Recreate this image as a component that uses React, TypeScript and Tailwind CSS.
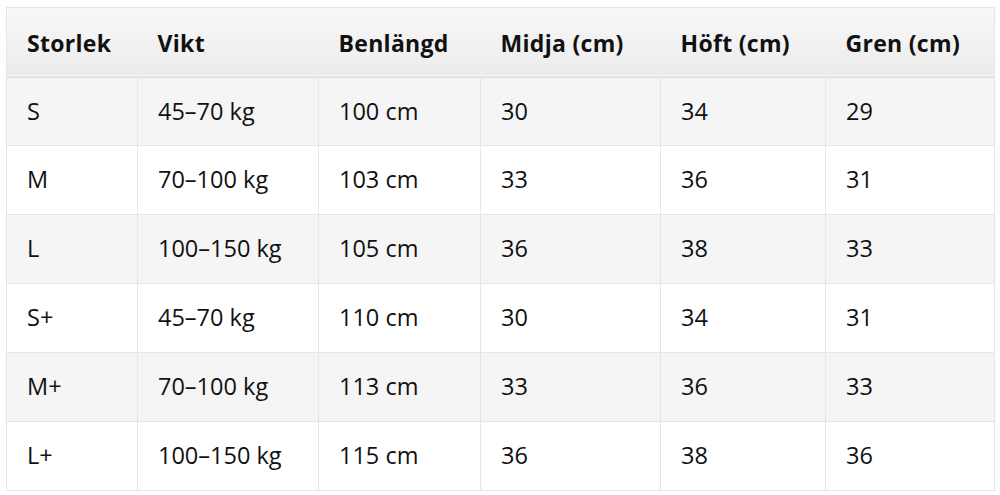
import React from 'react';

const headers = ['Storlek', 'Vikt', 'Benlängd', 'Midja (cm)', 'Höft (cm)', 'Gren (cm)'];

const rows: string[][] = [
  ['S', '45–70 kg', '100 cm', '30', '34', '29'],
  ['M', '70–100 kg', '103 cm', '33', '36', '31'],
  ['L', '100–150 kg', '105 cm', '36', '38', '33'],
  ['S+', '45–70 kg', '110 cm', '30', '34', '31'],
  ['M+', '70–100 kg', '113 cm', '33', '36', '33'],
  ['L+', '100–150 kg', '115 cm', '36', '38', '36'],
];

const widths = ['w-[131px]', 'w-[181px]', 'w-[162px]', 'w-[180px]', 'w-[165px]', 'w-[169px]'];

const App: React.FC = () => {
  return (
    <div className="w-[1000px] h-[495px] bg-white pt-[7px] pl-[6px] font-['Open_Sans',sans-serif] text-[#111]">
      <table className="table-fixed border-collapse border border-[#e6e6e6] w-[989px]">
        <colgroup>
          {widths.map((w, i) => (
            <col key={i} className={w} />
          ))}
        </colgroup>
        <thead>
          <tr className="h-[69px] bg-gradient-to-b from-[#f8f8f8] to-[#ececec] border-b-2 border-[#e2e2e2]">
            {headers.map((h) => (
              <th key={h} className="text-left font-bold text-[23px] pl-[20px] pt-[2px] align-middle tracking-[0.3px]">
                {h}
              </th>
            ))}
          </tr>
        </thead>
        <tbody>
          {rows.map((r, i) => (
            <tr key={i} className={`h-[69px] ${i % 2 === 0 ? 'bg-[#f5f5f5]' : 'bg-white'}`}>
              {r.map((c, j) => (
                <td key={j} className="border border-[#e6e6e6] pl-[20px] text-[23.5px] align-middle">
                  {c}
                </td>
              ))}
            </tr>
          ))}
        </tbody>
      </table>
    </div>
  );
};

export default App;
